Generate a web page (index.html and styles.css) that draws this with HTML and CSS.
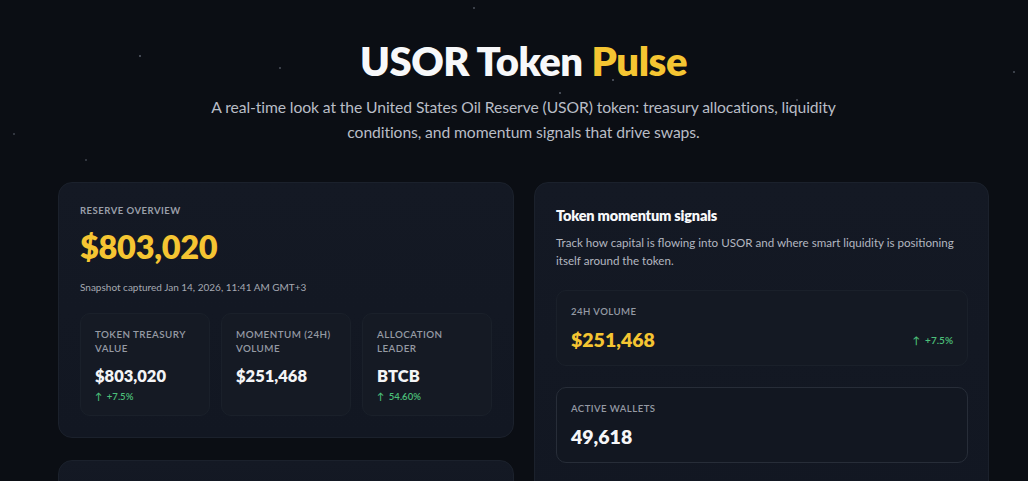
FILE: index.html
```html
<!DOCTYPE html>
<html lang="en">
<head>
<meta charset="utf-8">
<title>USOR Token Pulse</title>
<link rel="stylesheet" href="styles.css">
</head>
<body>
<div class="page">
  <header class="hero">
    <h1 class="title">USOR Token <span class="accent">Pulse</span></h1>
    <p class="subtitle">A real-time look at the United States Oil Reserve (USOR) token: treasury allocations, liquidity<br>conditions, and momentum signals that drive swaps.</p>
  </header>

  <main class="grid">
    <div class="col">
      <section class="card overview">
        <div class="eyebrow">Reserve overview</div>
        <div class="big-value">$803,020</div>
        <div class="snapshot">Snapshot captured Jan 14, 2026, 11:41 AM GMT+3</div>
        <div class="stats">
          <div class="stat">
            <div class="stat-label">Token treasury value</div>
            <div class="stat-value">$803,020</div>
            <div class="change">&#8593;&nbsp; +7.5%</div>
          </div>
          <div class="stat">
            <div class="stat-label">Momentum (24H) volume</div>
            <div class="stat-value">$251,468</div>
          </div>
          <div class="stat">
            <div class="stat-label">Allocation leader</div>
            <div class="stat-value">BTCB</div>
            <div class="change">&#8593;&nbsp; 54.60%</div>
          </div>
        </div>
      </section>
      <section class="card next"></section>
    </div>

    <section class="card signals">
      <h2 class="card-title">Token momentum signals</h2>
      <p class="card-desc">Track how capital is flowing into USOR and where smart liquidity is positioning itself around the token.</p>
      <div class="metric">
        <div class="metric-label">24H Volume</div>
        <div class="metric-row">
          <div class="metric-value yellow">$251,468</div>
          <div class="change">&#8593;&nbsp; +7.5%</div>
        </div>
      </div>
      <div class="metric outlined">
        <div class="metric-label">Active wallets</div>
        <div class="metric-row">
          <div class="metric-value">49,618</div>
        </div>
      </div>
    </section>
  </main>
</div>
</body>
</html>
```

FILE: styles.css
```css
* { box-sizing: border-box; margin: 0; padding: 0; }

html, body { height: 100%; }

body {
  background-color: #0b0e14;
  background-image:
    radial-gradient(circle at 140px 56px, rgba(200,210,230,0.3) 0 1px, transparent 1.5px),
    radial-gradient(circle at 280px 68px, rgba(200,210,230,0.25) 0 1px, transparent 1.5px),
    radial-gradient(circle at 404px 52px, rgba(200,210,230,0.25) 0 1px, transparent 1.5px),
    radial-gradient(circle at 613px 80px, rgba(200,210,230,0.3) 0 1px, transparent 1.5px),
    radial-gradient(circle at 560px 93px, rgba(200,210,230,0.3) 0 1px, transparent 1.5px),
    radial-gradient(circle at 797px 100px, rgba(200,210,230,0.25) 0 1px, transparent 1.5px),
    radial-gradient(circle at 1014px 72px, rgba(200,210,230,0.25) 0 1px, transparent 1.5px),
    radial-gradient(circle at 86px 160px, rgba(200,210,230,0.2) 0 1px, transparent 1.5px),
    radial-gradient(circle at 14px 134px, rgba(200,210,230,0.2) 0 1px, transparent 1.5px),
    radial-gradient(circle at 474px 8px, rgba(200,210,230,0.25) 0 1px, transparent 1.5px);
  font-family: "Lato", "Open Sans", sans-serif;
  color: #e8eaef;
  overflow: hidden;
}

.page {
  width: 931px;
  margin-left: 58px;
  padding-top: 37px;
}

.hero {
  text-align: center;
}

.title {
  font-size: 40px;
  font-weight: 800;
  letter-spacing: -0.5px;
  line-height: 48px;
  color: #f7f8fa;
}

.accent { color: #f5c532; }

.subtitle {
  margin-top: 10px;
  font-size: 15.7px;
  line-height: 25px;
  color: #b9bdc6;
  letter-spacing: -0.1px;
}

.grid {
  margin-top: 37px;
  display: grid;
  grid-template-columns: 456px 455px;
  column-gap: 20px;
  align-items: start;
}

.col {
  display: flex;
  flex-direction: column;
  gap: 22px;
}

.card {
  background: linear-gradient(180deg, #141924 0%, #121722 100%);
  border: 1px solid #1b212c;
  border-radius: 14px;
}

.overview {
  height: 256px;
  padding: 22px 21px 0 21px;
}

.eyebrow {
  font-size: 9.5px;
  font-weight: 700;
  letter-spacing: 0.5px;
  text-transform: uppercase;
  color: #9a9fa9;
  line-height: 12px;
}

.big-value {
  margin-top: 11px;
  font-size: 32.5px;
  font-weight: 800;
  line-height: 38px;
  color: #f5c532;
  letter-spacing: -0.3px;
}

.snapshot {
  margin-top: 15px;
  font-size: 10px;
  color: #a5a9b2;
  line-height: 12px;
}

.stats {
  margin-top: 20px;
  display: grid;
  grid-template-columns: repeat(3, 1fr);
  column-gap: 11px;
}

.stat {
  height: 103px;
  background: #151a24;
  border: 1px solid #1a202a;
  border-radius: 10px;
  padding: 13px 14px 0 14px;
}

.stat-label {
  font-size: 9.8px;
  line-height: 14px;
  letter-spacing: 0.45px;
  text-transform: uppercase;
  color: #959aa4;
  font-weight: 600;
  width: 96px;
}

.stat-value {
  margin-top: 11px;
  font-size: 16.5px;
  font-weight: 800;
  line-height: 20px;
  color: #f3f4f6;
}

.change {
  font-size: 9.5px;
  font-weight: 600;
  color: #4cc07a;
  line-height: 12px;
}

.stat .change { margin-top: 5px; }

.next {
  height: 60px;
}

.signals {
  height: 330px;
  padding: 24px 20px 0 21px;
}

.card-title {
  font-size: 14.5px;
  font-weight: 800;
  line-height: 18px;
  color: #f7f8fa;
  letter-spacing: -0.2px;
}

.card-desc {
  margin-top: 9px;
  font-size: 11.6px;
  line-height: 18px;
  color: #b3b7c0;
  width: 412px;
}

.metric {
  margin-top: 20px;
  height: 76px;
  background: #141923;
  border: 1px solid #1a202a;
  border-radius: 10px;
  padding: 15px 14px 0 14px;
}

.metric.outlined {
  margin-top: 21px;
  background: #121721;
  border-color: #272d38;
}

.metric-label {
  font-size: 9.6px;
  letter-spacing: 0.45px;
  text-transform: uppercase;
  color: #959aa4;
  font-weight: 600;
  line-height: 12px;
}

.metric-row {
  margin-top: 9px;
  display: flex;
  justify-content: space-between;
  align-items: center;
}

.metric-value {
  font-size: 19.5px;
  font-weight: 800;
  line-height: 26px;
  color: #f5f6f8;
}

.metric-value.yellow { color: #f5c532; }

.metric-row .change {
  font-size: 10px;
}
```
